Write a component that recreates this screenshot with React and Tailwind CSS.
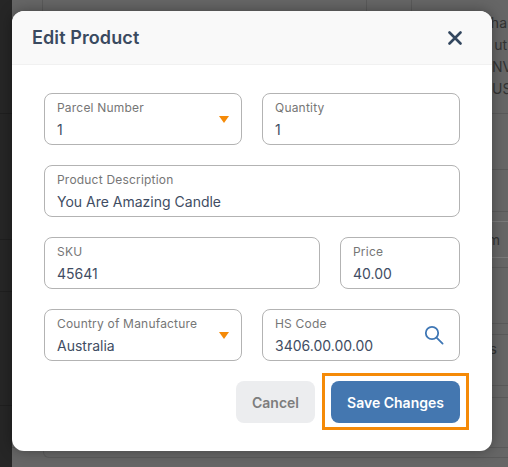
import React from "react";

const font = { fontFamily: "Inter, 'Liberation Sans', sans-serif" };

function Caret() {
  return (
    <svg width="10" height="7" viewBox="0 0 10 7" className="shrink-0">
      <path d="M0 0H10L5 7Z" fill="#f58a07" />
    </svg>
  );
}

function Field({ label, value, className, right }) {
  return (
    <div className={`h-[52px] flex items-center rounded-lg border border-[#b3b3b3] bg-white pl-3 pr-3 ${className}`}>
      <div className="flex-1 min-w-0">
        <div className="text-[12px] leading-[16px] text-[#767676] tracking-[0.2px] whitespace-nowrap">{label}</div>
        <div className="text-[14px] leading-[20px] mt-[4px] -mb-[1px] text-[#3f4d63] whitespace-nowrap">{value}</div>
      </div>
      {right}
    </div>
  );
}

function Page() {
  return (
    <div className="flex w-[508px] h-[467px] overflow-hidden bg-[#666666]">
      <div className="w-3 shrink-0 bg-[#262626] flex flex-col">
        <div className="h-[114px] border-b border-[#1f1f1f]" />
        <div className="h-[126px] border-b border-[#1f1f1f]" />
        <div className="h-[52px] border-b border-[#1f1f1f]" />
        <div className="h-[114px] border-b border-[#1f1f1f]" />
      </div>
      <div className="flex-1 flex flex-col min-w-0 text-[14px] text-[#333333]">
        <div className="h-[114px] shrink-0 flex border-b border-[#5a5a5a]">
          <div className="w-[31px] border-r border-[#5a5a5a]" />
          <div className="w-[324px] border-r border-[#5a5a5a]" />
          <div className="w-[45px] border-r border-[#5a5a5a]" />
          <div className="flex-1 pt-[12px] flex flex-col items-end leading-[22px] pr-[1px]">
            <span>ha</span>
            <span>ut</span>
            <span className="w-[15px] whitespace-nowrap">NV</span>
            <span className="w-[15px] whitespace-nowrap">US</span>
          </div>
        </div>
        <div className="h-[56px] shrink-0 border-b border-[#5a5a5a]" />
        <div className="h-[42px] shrink-0 border-b border-[#5a5a5a]" />
        <div className="h-[56px] shrink-0 flex items-center justify-end border-b border-[#5a5a5a]">
          <div className="h-[37px] w-[40px] rounded-l-md border border-r-0 border-[#7a7a7a] flex items-center justify-end leading-none pr-[8px]">m</div>
        </div>
        <div className="h-[56px] shrink-0 border-b border-[#5a5a5a]" />
        <div className="h-[11px] shrink-0 border-b border-[#5a5a5a]" />
        <div className="h-[51px] shrink-0 flex items-start pt-[3px] justify-end pr-[11px] border-b border-[#5a5a5a]">s</div>
        <div className="h-[12px] shrink-0 border-b border-[#5a5a5a]" />
        <div className="h-[50px] shrink-0 border-b border-[#5a5a5a]" />
        <div className="h-[10px] shrink-0 ml-[31px] rounded-bl-md border-l border-b border-[#5a5a5a]" />
      </div>
    </div>
  );
}

export default function App() {
  return (
    <div className="relative w-[508px] h-[467px] overflow-hidden" style={font}>
      <Page />
      <div className="absolute left-3 top-[11px] w-[480px] h-[440px] rounded-xl bg-white overflow-hidden shadow-[0_0_14px_rgba(0,0,0,0.35)]">
        <div className="h-[54px] bg-[#f9f9f9] border-b border-[#f1f1f1] pl-5 pr-[30px] flex items-center justify-between">
          <div className="text-[18px] font-semibold tracking-[0.1px] text-[#3a4a60]">Edit Product</div>
          <svg width="14" height="14" viewBox="0 0 14 14">
            <path d="M1.5 1.5L12.5 12.5M12.5 1.5L1.5 12.5" stroke="#33475f" strokeWidth="2.6" strokeLinecap="round" />
          </svg>
        </div>
        <div className="px-8 pt-7 flex flex-col gap-5">
          <div className="flex gap-5">
            <Field className="w-[198px]" label="Parcel Number" value="1" right={<Caret />} />
            <Field className="w-[198px]" label="Quantity" value="1" />
          </div>
          <Field label="Product Description" value="You Are Amazing Candle" />
          <div className="flex gap-5">
            <Field className="w-[276px]" label="SKU" value="45641" />
            <Field className="w-[120px]" label="Price" value="40.00" />
          </div>
          <div className="flex gap-5">
            <Field className="w-[198px]" label="Country of Manufacture" value="Australia" right={<Caret />} />
            <Field
              className="w-[198px]"
              label="HS Code"
              value="3406.00.00.00"
              right={
                <svg width="20" height="20" viewBox="0 0 20 20" fill="none" stroke="#3f77b5" strokeWidth="1.8" strokeLinecap="round" className="mr-[3px]">
                  <circle cx="8" cy="8" r="6.2" />
                  <path d="M12.6 12.6L18.6 18.6" />
                </svg>
              }
            />
          </div>
          <div className="flex justify-end items-center gap-[7px] -mr-[9px]">
            <button className="h-[42px] w-[79px] rounded-lg bg-[#ecedef] text-[14px] font-semibold text-[#7d7d7d]">Cancel</button>
            <div className="border-[3px] border-[#f58a07] px-[6px] pt-[5px] pb-[4px] -mt-[8px] -mb-[7px]">
              <button className="block h-[42px] w-[129px] rounded-lg bg-[#4477b0] text-[14px] font-semibold text-white">Save Changes</button>
            </div>
          </div>
        </div>
      </div>
    </div>
  );
}
